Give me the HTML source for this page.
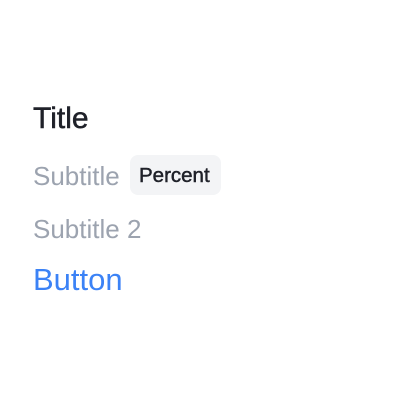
<!DOCTYPE html>
<html><head><style>
body{margin:0;width:400px;height:400px;background:#fff;font-family:"Liberation Sans",sans-serif;position:relative;overflow:hidden}
div{position:absolute;left:33px;white-space:nowrap;line-height:1}
</style></head><body>
<div style="top:104px;font-size:30px;color:#1f2129;-webkit-text-stroke:0.5px #1f2129">Title</div>
<div style="top:163px;font-size:26px;color:#9ca3af">Subtitle</div>
<div style="left:130px;top:155px;width:91px;height:40px;background:#f3f4f6;border-radius:8px"></div>
<div style="left:139px;top:166px;font-size:20.5px;color:#1f2129;-webkit-text-stroke:0.5px #1f2129">Percent</div>
<div style="top:216px;font-size:26px;color:#9ca3af">Subtitle 2</div>
<div style="top:264px;font-size:31px;color:#3b82f6">Button</div>
</body></html>
